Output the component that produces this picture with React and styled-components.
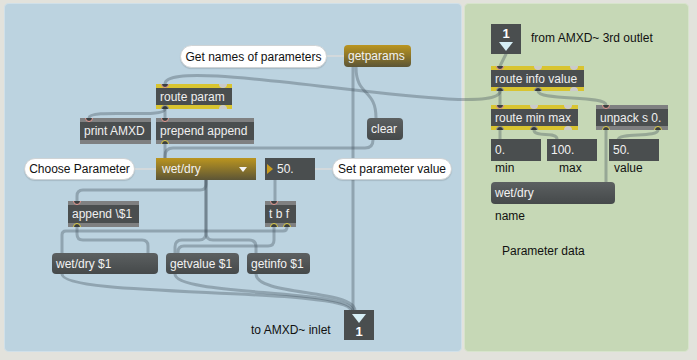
import React from "react";
import styled, { createGlobalStyle, css } from "styled-components";

const GlobalStyle = createGlobalStyle`
  body {
    margin: 0;
    background: #e2e2dc;
    font-family: "Liberation Sans", Arial, sans-serif;
  }
`;

const YELLOW = "#d8c430";
const GREY = "#7f8081";
const DARK = "#4a4e4f";

const Page = styled.div`
  position: relative;
  width: 697px;
  height: 360px;
  box-sizing: border-box;
  padding: 3px 0 0 4px;
  display: flex;
  gap: 2px;
  background: #e2e2dc;
  overflow: hidden;
`;

const Panel = styled.div`
  width: ${(p) => p.$w}px;
  height: 349px;
  border-radius: 5px;
  background: ${(p) => p.$bg};
  box-shadow: inset 0 0 0 1px rgba(255, 255, 255, 0.3);
`;

const Layer = styled.div`
  position: absolute;
  inset: 0;
`;

const Cords = styled.svg`
  position: absolute;
  left: 0;
  top: 0;
`;

const Node = styled.div`
  position: absolute;
  left: ${(p) => p.$x}px;
  top: ${(p) => p.$y}px;
  width: ${(p) => p.$w}px;
  height: ${(p) => p.$h}px;
  box-sizing: border-box;
  font-size: 12px;
  white-space: nowrap;
  display: flex;
  align-items: center;
`;

const ObjBox = styled(Node)`
  background: linear-gradient(
    ${(p) => p.$strip} 0 4px,
    ${DARK} 4px calc(100% - 4px),
    ${(p) => p.$strip} calc(100% - 4px)
  );
  color: #f0f0f0;
  padding-left: 4px;
  overflow: hidden;
`;

const portKinds = {
  in: css`
    background: #3c4041;
    border: 1.5px solid #e89c94;
  `,
  free: css`
    background: #cacaca;
  `,
  out: css`
    background: #35393a;
    border: 1.5px solid #9a9a9a;
  `,
  ring: css`
    background: #3c4041;
    border: 1.5px solid #e0cf4a;
  `,
};

const Port = styled.span`
  position: absolute;
  left: ${(p) => p.$at - 4}px;
  ${(p) => (p.$bottom ? "bottom" : "top")}: -4px;
  width: 8px;
  height: 8px;
  border-radius: 50%;
  box-sizing: border-box;
  ${(p) => portKinds[p.$kind]}
`;

const Msg = styled(Node)`
  border-radius: 4px;
  padding-left: 4px;
  color: #f2f2f2;
  background: ${(p) =>
    p.$gold
      ? "linear-gradient(#bb951f, #5c5536)"
      : "linear-gradient(#5c6061, #45494a)"};
`;

const Menu = styled(Node)`
  padding-left: 6px;
  color: #f2f2f2;
  background: linear-gradient(#bb951f, #5c5536);
  &::after {
    content: "";
    position: absolute;
    right: 9px;
    top: 9px;
    border-left: 4px solid transparent;
    border-right: 4px solid transparent;
    border-top: 5px solid #f4f4f4;
  }
`;

const Num = styled(Node)`
  background: ${DARK};
  color: #f2f2f2;
  padding-left: ${(p) => (p.$arrow ? 12 : 4)}px;
  ${(p) =>
    p.$arrow &&
    css`
      &::before {
        content: "";
        position: absolute;
        left: 2px;
        top: 6px;
        border-top: 5px solid transparent;
        border-bottom: 5px solid transparent;
        border-left: 6px solid #c99c20;
      }
    `}
`;

const Bubble = styled(Node)`
  justify-content: center;
  background: #fff;
  color: #111;
  border: 1px solid #cfd3d5;
  border-radius: 12px;
  box-shadow: 0 1px 1px rgba(0, 0, 0, 0.12);
`;

const Label = styled.div`
  position: absolute;
  left: ${(p) => p.$x}px;
  top: ${(p) => p.$y - 8}px;
  height: 16px;
  line-height: 16px;
  font-size: 12px;
  color: #111;
  white-space: nowrap;
`;

const PortBox = styled(Node)`
  width: 30px;
  height: 30px;
  background: ${DARK};
  flex-direction: ${(p) => (p.$out ? "column-reverse" : "column")};
  justify-content: center;
  gap: 3px;
  color: #fff;
  font-weight: bold;
  font-size: 13px;
  line-height: 11px;
`;

const Arrow = styled.span`
  width: 0;
  height: 0;
  border-left: 7px solid transparent;
  border-right: 7px solid transparent;
  border-top: 9px solid #d6eef5;
`;

const objects = [
  { x: 156, y: 84, w: 76, h: 25, strip: YELLOW, text: "route param", top: [["in", 9], ["free", 67]], bottom: [["out", 9], ["free", 67]] },
  { x: 80, y: 118, w: 71, h: 26, strip: GREY, text: "print AMXD", top: [["in", 9]], bottom: [] },
  { x: 156, y: 118, w: 98, h: 26, strip: GREY, text: "prepend append", top: [["in", 9]], bottom: [["ring", 9]] },
  { x: 68, y: 201, w: 71, h: 26, strip: GREY, text: "append \\$1", top: [["in", 9]], bottom: [["ring", 9]] },
  { x: 265, y: 201, w: 31, h: 26, strip: GREY, text: "t b f", top: [["in", 9]], bottom: [["ring", 9], ["ring", 22]] },
  { x: 491, y: 66, w: 93, h: 25, strip: YELLOW, text: "route info value", top: [["in", 9], ["free", 47], ["free", 83]], bottom: [["out", 9], ["out", 47], ["free", 83]] },
  { x: 491, y: 105, w: 87, h: 25, strip: YELLOW, text: "route min max", top: [["in", 9], ["free", 43], ["free", 77]], bottom: [["out", 9], ["out", 43], ["free", 77]] },
  { x: 596, y: 105, w: 72, h: 25, strip: GREY, text: "unpack s 0.", top: [["in", 10]], bottom: [["ring", 10], ["ring", 62]] },
];

const messages = [
  { x: 344, y: 45, w: 67, h: 22, text: "getparams", gold: true },
  { x: 367, y: 118, w: 36, h: 22, text: "clear" },
  { x: 52, y: 253, w: 106, h: 21, text: "wet/dry $1" },
  { x: 166, y: 253, w: 73, h: 21, text: "getvalue $1" },
  { x: 247, y: 253, w: 63, h: 21, text: "getinfo $1" },
  { x: 491, y: 182, w: 124, h: 22, text: "wet/dry" },
];

const numbers = [
  { x: 265, y: 158, text: "50.", arrow: true },
  { x: 491, y: 139, text: "0." },
  { x: 547, y: 139, text: "100." },
  { x: 609, y: 139, text: "50." },
];

const bubbles = [
  { x: 180, y: 45, w: 147, h: 23, text: "Get names of parameters" },
  { x: 24, y: 158, w: 111, h: 22, text: "Choose Parameter" },
  { x: 332, y: 158, w: 120, h: 22, text: "Set parameter value" },
];

const labels = [
  { x: 531, y: 38, text: "from AMXD~ 3rd outlet" },
  { x: 495, y: 168, text: "min" },
  { x: 559, y: 168, text: "max" },
  { x: 614, y: 168, text: "value" },
  { x: 495, y: 216, text: "name" },
  { x: 502, y: 251, text: "Parameter data" },
  { x: 251, y: 330, text: "to AMXD~ inlet" },
];

const line = (x0, y0, x1, y1) => `M${x0} ${y0} L${x1} ${y1}`;
const bez = (x0, y0, x1, y1, d) =>
  `M${x0} ${y0} C${x0} ${y0 + d} ${x1} ${y1 - d} ${x1} ${y1}`;
const elbow = (x0, y0, x1, y1, ym, r) => {
  const dir = x1 > x0 ? 1 : -1;
  const k = Math.min(r, Math.abs(x1 - x0) / 2, ym - y0, y1 - ym);
  return `M${x0} ${y0} V${ym - k} Q${x0} ${ym} ${x0 + dir * k} ${ym} H${x1 - dir * k} Q${x1} ${ym} ${x1} ${ym + k} V${y1}`;
};

const cords = [
  line(353, 67, 353, 311),
  bez(356, 67, 376, 118, 30),
  elbow(373, 140, 165, 158, 148, 8),
  bez(500, 91, 165, 84, 32),
  line(165, 109, 165, 118),
  bez(165, 109, 89, 118, 10),
  line(165, 144, 165, 158),
  elbow(206, 180, 77, 201, 190, 6),
  elbow(206, 180, 175, 253, 240, 7),
  elbow(206, 180, 256, 253, 240, 7),
  line(275, 180, 275, 201),
  elbow(274, 227, 178, 253, 246, 6),
  elbow(287, 227, 62, 253, 231, 5),
  elbow(77, 227, 148, 253, 240, 6),
  bez(62, 274, 351, 311, 24),
  bez(175, 274, 353, 311, 22),
  bez(256, 274, 355, 311, 22),
  line(506, 54, 500, 66),
  line(500, 91, 500, 105),
  bez(538, 91, 606, 105, 10),
  line(500, 130, 500, 139),
  bez(534, 130, 557, 139, 8),
  line(606, 130, 606, 186),
  bez(658, 130, 618, 140, 8),
];

const connectors = [
  line(327, 56, 344, 56),
  line(135, 169, 156, 169),
  line(315, 169, 332, 169),
];

export default function App() {
  return (
    <>
      <GlobalStyle />
      <Page>
        <Panel $w={458} $bg="#bcd3e0" />
        <Panel $w={225} $bg="#c6d8b6" />
        <Layer>
          <Cords width="697" height="360">
            {connectors.map((d, i) => (
              <path key={"c" + i} d={d} stroke="#d3d9dc" strokeWidth="2" fill="none" />
            ))}
            {cords.map((d, i) => (
              <path
                key={i}
                d={d}
                stroke="rgba(60,72,85,0.34)"
                strokeWidth="3"
                fill="none"
                strokeLinecap="round"
              />
            ))}
          </Cords>

          {bubbles.map((b) => (
            <Bubble key={b.text} $x={b.x} $y={b.y} $w={b.w} $h={b.h}>
              {b.text}
            </Bubble>
          ))}

          {objects.map((o) => (
            <ObjBox key={o.text} $x={o.x} $y={o.y} $w={o.w} $h={o.h} $strip={o.strip}>
              {o.top.map(([k, at]) => (
                <Port key={"t" + at} $kind={k} $at={at} />
              ))}
              {o.bottom.map(([k, at]) => (
                <Port key={"b" + at} $kind={k} $at={at} $bottom />
              ))}
              {o.text}
            </ObjBox>
          ))}

          {messages.map((m) => (
            <Msg key={m.text + m.x} $x={m.x} $y={m.y} $w={m.w} $h={m.h} $gold={m.gold}>
              {m.text}
            </Msg>
          ))}

          <Menu $x={156} $y={158} $w={100} $h={22}>
            wet/dry
          </Menu>

          {numbers.map((n) => (
            <Num key={n.x} $x={n.x} $y={n.y} $w={50} $h={22} $arrow={n.arrow}>
              {n.text}
            </Num>
          ))}

          <PortBox $x={491} $y={24}>
            <span>1</span>
            <Arrow />
          </PortBox>
          <PortBox $x={344} $y={310} $out>
            <span>1</span>
            <Arrow />
          </PortBox>

          {labels.map((l) => (
            <Label key={l.text} $x={l.x} $y={l.y}>
              {l.text}
            </Label>
          ))}
        </Layer>
      </Page>
    </>
  );
}
